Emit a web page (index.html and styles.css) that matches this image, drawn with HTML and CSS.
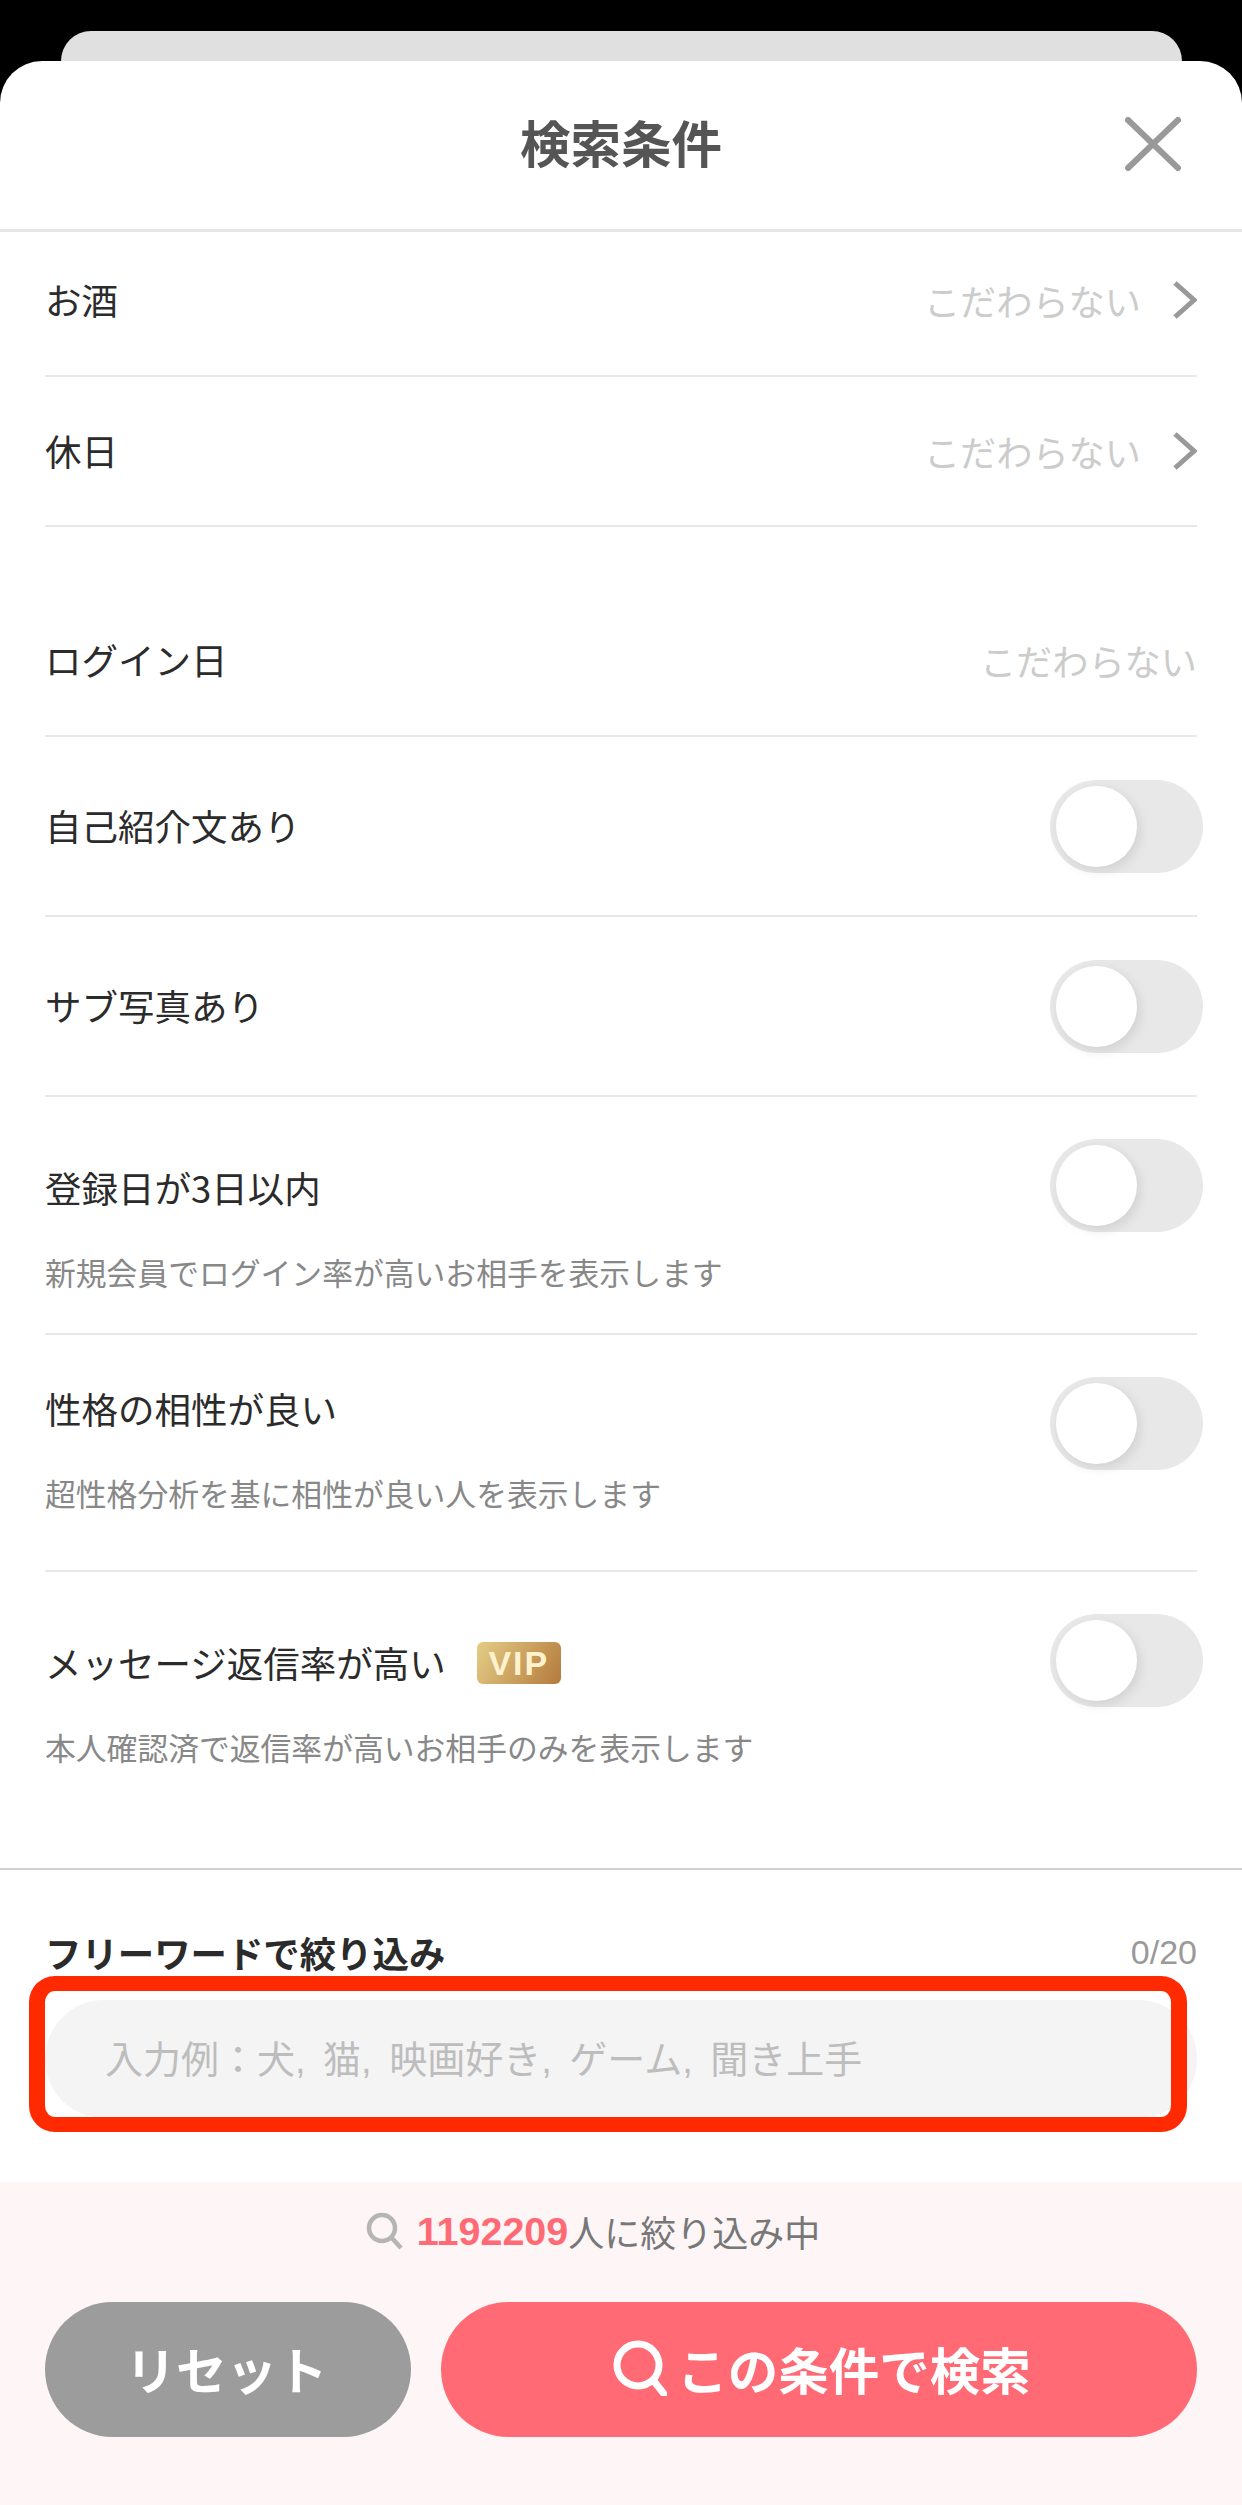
FILE: index.html
```html
<!DOCTYPE html>
<html lang="ja">
<head>
<meta charset="utf-8">
<title>検索条件</title>
<link rel="stylesheet" href="styles.css">
</head>
<body>
<div class="back-card"></div>
<main class="sheet">
  <header class="head">
    <h1 class="title">検索条件</h1>
    <svg class="close" viewBox="0 0 56 54"><path d="M3 3 53 51M53 3 3 51"/></svg>
  </header>
  <section class="list first">
    <div class="row row-link row-a"><span class="label">お酒</span><span class="value">こだわらない</span><svg class="chev" viewBox="0 0 24 38"><path d="M2 2 21 19 2 36"/></svg></div>
    <div class="row row-link row-b"><span class="label">休日</span><span class="value">こだわらない</span><svg class="chev" viewBox="0 0 24 38"><path d="M2 2 21 19 2 36"/></svg></div>
  </section>
  <section class="list second">
    <div class="row row-link"><span class="label">ログイン日</span><span class="value">こだわらない</span></div>
    <div class="row row-toggle"><span class="label">自己紹介文あり</span><span class="toggle"></span></div>
    <div class="row row-toggle"><span class="label">サブ写真あり</span><span class="toggle"></span></div>
    <div class="row row-detail"><div class="texts"><span class="label">登録日が3日以内</span><span class="note">新規会員でログイン率が高いお相手を表示します</span></div><span class="toggle"></span></div>
    <div class="row row-detail row-detail-b"><div class="texts"><span class="label">性格の相性が良い</span><span class="note">超性格分析を基に相性が良い人を表示します</span></div><span class="toggle"></span></div>
    <div class="row row-detail row-last"><div class="texts"><span class="label label-vip">メッセージ返信率が高い<span class="vip">VIP</span></span><span class="note">本人確認済で返信率が高いお相手のみを表示します</span></div><span class="toggle"></span></div>
  </section>
  <section class="free">
    <div class="free-head"><span class="free-title">フリーワードで絞り込み</span><span class="free-count">0/20</span></div>
    <div class="input-wrap">
      <div class="input">入力例：犬, 猫, 映画好き, ゲーム, 聞き上手</div>
      <div class="highlight"></div>
    </div>
  </section>
  <footer class="foot">
    <div class="count">
      <svg class="count-icon" viewBox="0 0 38 38"><circle cx="16" cy="16" r="13"/><path d="M25 25 35 36"/></svg>
      <b class="num">1192209</b><span>人に絞り込み中</span>
    </div>
    <div class="actions">
      <div class="btn btn-reset">リセット</div>
      <div class="btn btn-search"><svg class="btn-icon" viewBox="0 0 54 56"><circle cx="25" cy="25" r="21"/><path d="M40 40 51 54"/></svg>この条件で検索</div>
    </div>
  </footer>
</main>
</body>
</html>
```
FILE: styles.css
```css
* { box-sizing: border-box; }
html, body { margin: 0; padding: 0; }
body {
  width: 1242px;
  height: 2505px;
  overflow: hidden;
  background: #000;
  padding-top: 31px;
  font-family: "Noto Sans CJK JP", "Noto Sans", sans-serif;
  color: #333;
}
.back-card {
  height: 30px;
  margin: 0 60px 0 61px;
  background: #e0e0e0;
  border-radius: 30px 30px 0 0;
}
.sheet {
  height: 2444px;
  background: #fff;
  border-radius: 42px 42px 0 0;
  display: flex;
  flex-direction: column;
}
.head {
  position: relative;
  height: 171px;
  flex: none;
  border-bottom: 3px solid #e6e6e6;
  display: flex;
  align-items: center;
  justify-content: center;
  padding-bottom: 8px;
}
.title {
  margin: 0;
  font-size: 50.5px;
  font-weight: 700;
  color: #555;
  line-height: 1;
}
.close {
  position: absolute;
  left: 1125px;
  top: 56px;
  width: 56px;
  height: 54px;
  fill: none;
  stroke: #999;
  stroke-width: 6;
  stroke-linecap: round;
}
.list { margin: 0 45px; }
.second { margin-top: 60px; }
.row {
  display: flex;
  align-items: center;
  border-bottom: 2px solid #e8e8e8;
}
.row-link { height: 150px; padding-bottom: 2px; }
.row-a { height: 145px; padding-bottom: 8px; }
.row-b { padding-bottom: 0; }
.row-toggle { height: 180px; }
.row-detail { height: 238px; align-items: flex-start; padding-top: 42px; }
.row-detail-b { height: 237px; }
.row-last { height: 296px; border-bottom: 0; }
.label {
  font-size: 36.5px;
  line-height: 52px;
  color: #2b2b2b;
  flex: none;
}
.value {
  margin-left: auto;
  font-size: 36.2px;
  line-height: 52px;
  color: #ccc;
}
.chev {
  width: 24px;
  height: 38px;
  margin-left: 32px;
  fill: none;
  stroke: #999;
  stroke-width: 5;
  flex: none;
}
.toggle {
  position: relative;
  margin-left: auto;
  margin-right: -6px;
  width: 153px;
  height: 93px;
  border-radius: 47px;
  background: #e8e8e8;
  flex: none;
}
.toggle::after {
  content: "";
  position: absolute;
  left: 6px;
  top: 6px;
  width: 81px;
  height: 81px;
  border-radius: 50%;
  background: #fff;
  box-shadow: 3px 4px 12px rgba(0, 0, 0, 0.1);
}
.texts { display: flex; flex-direction: column; padding-top: 23px; }
.row-detail-b .texts { padding-top: 6px; }
.note {
  margin-top: 34px;
  font-size: 30.8px;
  line-height: 48px;
  color: #888;
}
.label-vip { display: flex; align-items: center; }
.vip {
  margin-left: 31px;
  width: 84px;
  height: 42px;
  border-radius: 6px;
  background: linear-gradient(120deg, #e4cd86, #b47a3c);
  color: #fff2cf;
  font-family: "Liberation Sans", sans-serif;
  font-size: 34px;
  letter-spacing: 2px;
  line-height: 42px;
  font-weight: 700;
  text-align: center;
}
.free {
  flex: 1;
  border-top: 2px solid #d0d0d0;
  padding: 58px 45px 0;
}
.free-head {
  display: flex;
  justify-content: space-between;
  align-items: center;
  height: 48px;
  margin-bottom: 2px;
}
.free-title { font-size: 36.4px; font-weight: 700; color: #2b2b2b; line-height: 48px; }
.free-count { font-size: 34px; color: #999; font-family: "Liberation Sans", sans-serif; }
.input-wrap { position: relative; margin-top: 24px; }
.input {
  height: 118px;
  border-radius: 59px;
  background: #f4f4f4;
  padding-left: 60px;
  font-family: "Liberation Sans", "Noto Sans CJK JP", sans-serif;
  font-size: 38px;
  word-spacing: 7px;
  line-height: 121px;
  color: #bdbdbd;
  white-space: nowrap;
}
.highlight {
  position: absolute;
  left: -16px;
  top: -24px;
  width: 1158px;
  height: 156px;
  border: 15px solid #ff2a00;
  border-width: 15px 16px;
  border-radius: 26px;
}
.foot {
  height: 323px;
  flex: none;
  background: #fdf5f6;
  padding: 0 45px;
}
.count {
  height: 98px;
  display: flex;
  align-items: center;
  justify-content: center;
  padding-right: 56px;
  font-size: 36px;
  color: #777;
}
.count-icon {
  width: 38px;
  height: 38px;
  margin-right: 13px;
  fill: none;
  stroke: #b5b5b5;
  stroke-width: 4.5;
}
.num {
  font-family: "Liberation Sans", sans-serif;
  font-size: 39.5px;
  color: #ff6a75;
  font-weight: 700;
}
.actions { margin-top: 22px; display: flex; gap: 30px; }
.btn {
  height: 135px;
  border-radius: 68px;
  color: #fff;
  font-weight: 700;
  font-size: 50.5px;
  padding-bottom: 4px;
  display: flex;
  align-items: center;
  justify-content: center;
}
.btn-reset { width: 366px; background: #9c9c9c; padding-right: 3px; }
.btn-search { flex: 1; background: #ff6a75; padding-left: 6px; }
.btn-icon {
  width: 54px;
  height: 56px;
  margin-right: 10px;
  fill: none;
  stroke: #fff;
  stroke-width: 7;
  stroke-linecap: round;
}
```
